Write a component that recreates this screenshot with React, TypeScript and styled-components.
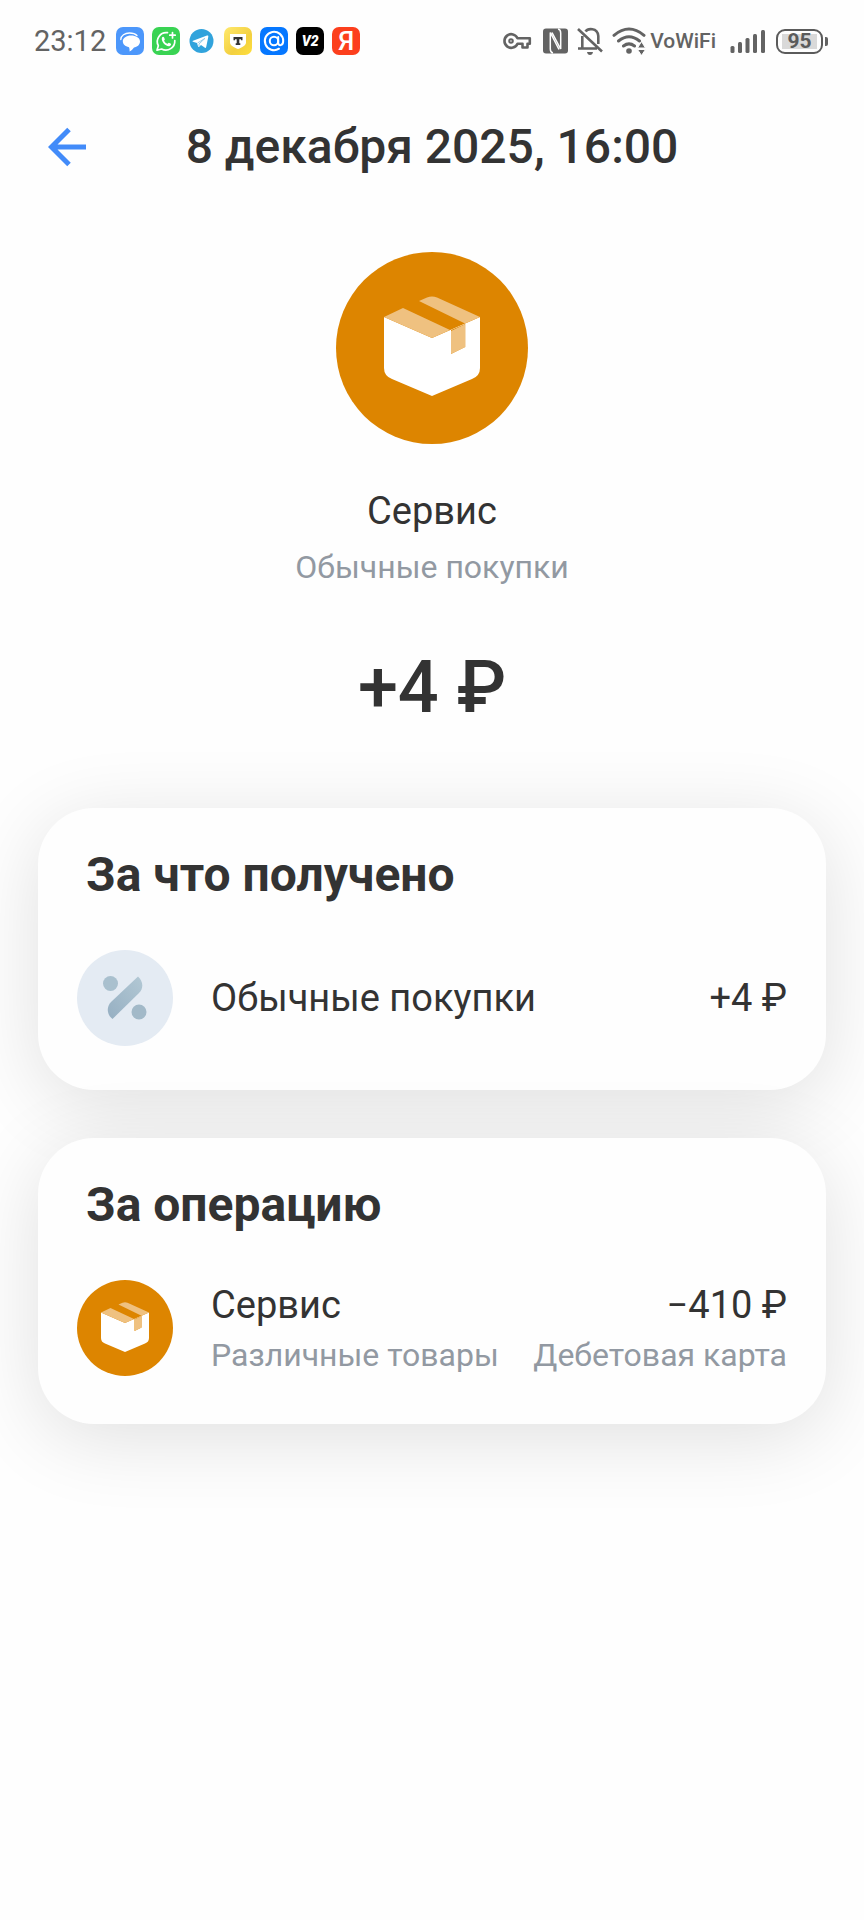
import React from 'react';
import styled, { createGlobalStyle } from 'styled-components';

const GlobalStyle = createGlobalStyle`
  * { box-sizing: border-box; }
  body {
    margin: 0;
    background: #fefefe;
    color: #333333;
    font-family: Roboto, "Noto Sans", sans-serif;
  }
  h1, h2, p { margin: 0; }
  svg { display: block; flex: none; }
`;

const Screen = styled.div`
  min-height: 100vh;
  display: flex;
  flex-direction: column;
  overflow: hidden;
`;

const StatusBar = styled.div`
  display: flex;
  align-items: center;
  justify-content: space-between;
  height: 82px;
  padding: 0 36px 0 34px;
  color: #636363;
`;

const StatusGroup = styled.div<{ $gap: number }>`
  display: flex;
  align-items: center;
  gap: ${(p) => p.$gap}px;
`;

const Clock = styled.time`
  margin-right: 2px;
  font-size: 29px;
  line-height: 36px;
`;

const Network = styled.span`
  margin: 0 4px 0 -6px;
  font-size: 21px;
  font-weight: 500;
  line-height: 28px;
`;

const AppBar = styled.header`
  display: grid;
  grid-template-columns: 56px 1fr 56px;
  align-items: center;
  padding: 37px 40px 0;
`;

const BackButton = styled.button`
  display: flex;
  align-items: center;
  justify-content: center;
  height: 56px;
  padding: 0;
  border: 0;
  background: none;
  color: #428bf9;
`;

const PageTitle = styled.h1`
  font-size: 48px;
  font-weight: 500;
  line-height: 56px;
  text-align: center;
`;

const Hero = styled.section`
  display: flex;
  flex-direction: column;
  align-items: center;
  padding: 77px 38px 78px;
`;

const Avatar = styled.div<{ $size: number; $color: string }>`
  display: flex;
  flex: none;
  align-items: center;
  justify-content: center;
  width: ${(p) => p.$size}px;
  height: ${(p) => p.$size}px;
  border-radius: 50%;
  background: ${(p) => p.$color};
`;

const Name = styled.p`
  font-size: 38px;
  line-height: 48px;
`;

const Caption = styled.p`
  color: #9299a2;
  font-size: 32px;
  line-height: 40px;
`;

const HeroText = styled.div`
  display: flex;
  flex-direction: column;
  align-items: center;
  gap: 12px;
  margin: 43px 0 59px;
`;

const Amount = styled.p`
  font-size: 72px;
  font-weight: 500;
  line-height: 84px;
`;

const Cards = styled.main`
  display: flex;
  flex-direction: column;
  gap: 48px;
  padding: 0 38px 48px;
`;

const Card = styled.section`
  padding: 39px 39px 44px;
  border-radius: 56px;
  background: #fefefe;
  box-shadow: 0 14px 80px rgba(0, 0, 0, 0.12);
`;

const CardTitle = styled.h2`
  margin: 0 9px 47px;
  font-size: 48px;
  font-weight: 700;
  line-height: 56px;
`;

const Row = styled.div<{ $twoLine?: boolean }>`
  display: flex;
  align-items: center;
  gap: 24px;
  padding-bottom: ${(p) => (p.$twoLine ? 4 : 0)}px;
`;

const RowText = styled.div<{ $end?: boolean }>`
  display: flex;
  flex: ${(p) => (p.$end ? 'none' : '1')};
  flex-direction: column;
  align-items: ${(p) => (p.$end ? 'flex-end' : 'flex-start')};
  gap: 6px;
  padding-left: ${(p) => (p.$end ? 0 : 14)}px;
  white-space: nowrap;
`;

const BoxIcon = ({ size }: { size: number }) => (
  <svg width={size} height={size} viewBox="0 0 192 192" aria-hidden="true">
    <path
      fill="#fff"
      d="M48 65 96 86 144 65V116Q144 124 136 127L96 144 56 127Q48 124 48 116Z"
    />
    <path fill="#dd8500" d="M115 78 129 72V95L115 102Z" />
    <path
      fill="#efc180"
      d="M48 65 67 56 114 78 96 86ZM83 49 91 45.500Q96 43.500 101 45.500L144 65 129 71.500ZM115 79 129.500 72V95L115 102Z"
    />
  </svg>
);

const PercentIcon = () => (
  <svg width="96" height="96" viewBox="0 0 96 96" aria-hidden="true">
    <defs>
      <linearGradient id="percent" x1="0" y1="1" x2="1" y2="0">
        <stop offset="0" stopColor="#96afc2" />
        <stop offset="1" stopColor="#b2c8d4" />
      </linearGradient>
    </defs>
    <path
      fill="url(#percent)"
      d="M61 26.500C66 31 67 38 62 43L35.500 69C30 65 29 57 34 52Z"
    />
    <circle cx="33.500" cy="33.500" r="7.500" fill="#a9c0ce" />
    <circle cx="62" cy="62" r="7.500" fill="#a2b9c8" />
  </svg>
);

const MessagesIcon = () => (
  <svg width="28" height="28" viewBox="0 0 28 28" aria-hidden="true">
    <rect width="28" height="28" rx="7" fill="#4c97fb" />
    <path
      fill="#fff"
      d="M15 8.500C20 8.500 24 11 24 14.500S21 20 18 20.500C17 22 15.500 23.500 13.500 24.500 13.800 23 13.500 21.500 13 20.300 9 19.500 6.800 17 6.800 14.300 6.800 11 10.500 8.500 15 8.500Z"
    />
    <path
      fill="none"
      stroke="#fff"
      strokeWidth="1.300"
      strokeLinecap="round"
      d="M4.800 12.500C4.800 8.500 9 6 13.500 6 17 6 19.500 7 21 8.500"
    />
  </svg>
);

const WhatsappIcon = () => (
  <svg width="28" height="28" viewBox="0 0 28 28" aria-hidden="true">
    <rect width="28" height="28" rx="7" fill="#39d353" />
    <g fill="none" stroke="#fff" strokeWidth="1.700" strokeLinecap="round" strokeLinejoin="round">
      <path d="M15.500 5.700A9 9 0 0 0 6.300 18.700L5 23.200 9.600 22A9 9 0 0 0 22.800 13.500" />
      <path d="M20.500 5.500V11M17.800 8.200H23.200" />
    </g>
    <path
      fill="#fff"
      d="M10 10.500C10.500 9.500 11.700 9.700 12 10.300L12.800 12.200C13 12.800 12 13.400 12.100 13.800 12.800 15.300 14 16.300 15.300 16.800 15.900 16.800 16.300 15.600 16.900 15.700L18.900 16.700C19.400 17.100 18.800 18.600 17.900 19 14.500 20.400 8.500 14.500 10 10.500Z"
    />
  </svg>
);

const TelegramIcon = () => (
  <svg width="28" height="28" viewBox="0 0 28 28" aria-hidden="true">
    <circle cx="13.500" cy="14" r="12" fill="#31a3dc" />
    <path
      fill="#fff"
      d="M5 13.800 19 8.600C20 8.300 20.500 8.800 20.300 9.800L18.200 20C18 21 17.300 21.100 16.600 20.600L13 18 11.200 19.800C10.600 20.300 10.200 20 10 19.300L9 16 5 14.700C4.300 14.400 4.300 14.100 5 13.800Z"
    />
    <path fill="none" stroke="#9bcde8" d="M9.500 16 17 11.300 11 17V19.500" />
  </svg>
);

const BankIcon = () => (
  <svg width="28" height="28" viewBox="0 0 28 28" aria-hidden="true">
    <defs>
      <linearGradient id="bank" x1="0" y1="0" x2="1" y2="1">
        <stop offset="0" stopColor="#ffe96e" />
        <stop offset="0.600" stopColor="#f3d040" />
        <stop offset="1" stopColor="#ffdf3a" />
      </linearGradient>
    </defs>
    <rect width="28" height="28" rx="7" fill="url(#bank)" />
    <path fill="#fff" d="M6 7H22V15.500C22 18.500 18 20.500 14 22 10 20.500 6 18.500 6 15.500Z" />
    <path
      fill="#333"
      d="M9.500 10H18.500V13.300H17V12.200H15.300V16.300H16.300V18H11.700V16.300H12.700V12.200H11V13.300H9.500Z"
    />
  </svg>
);

const MailIcon = () => (
  <svg width="28" height="28" viewBox="0 0 28 28" aria-hidden="true">
    <rect width="28" height="28" rx="7" fill="#0577ff" />
    <g fill="none" stroke="#fff" strokeWidth="2" strokeLinecap="round">
      <circle cx="14" cy="14" r="4.200" />
      <path d="M18.200 10V15.500C18.200 19.500 23.200 19 23.200 14A9.200 9.200 0 1 0 19 21.700" />
    </g>
  </svg>
);

const Tile = styled.span<{ $color: string; $size: number; $italic?: boolean }>`
  display: flex;
  align-items: center;
  justify-content: center;
  width: 28px;
  height: 28px;
  border-radius: 7px;
  background: ${(p) => p.$color};
  color: #ffffff;
  font-size: ${(p) => p.$size}px;
  font-weight: ${(p) => (p.$italic ? 900 : 500)};
  font-style: ${(p) => (p.$italic ? 'italic' : 'normal')};
  line-height: 28px;
`;

const KeyIcon = () => (
  <svg width="30" height="28" viewBox="0 0 30 28" aria-hidden="true">
    <g fill="none" stroke="currentColor" strokeWidth="2.600" strokeLinejoin="round">
      <path d="M14.500 11.300A6.800 6.800 0 1 0 14.500 16.700H19.500V20.500H24.500V16.700H26.800V11.300Z" />
      <circle cx="8" cy="14" r="1.800" strokeWidth="2" />
    </g>
  </svg>
);

const NfcIcon = () => (
  <svg width="25" height="26" viewBox="0 0 25 26" aria-hidden="true">
    <rect y="0.500" width="25" height="25" rx="3" fill="currentColor" />
    <path
      fill="none"
      stroke="#fefefe"
      strokeWidth="1.500"
      d="M10 25Q7.300 24.500 7.300 21V4.500L16 21.500M9 4.500 17.700 21V5Q17.700 1.500 15 1"
    />
  </svg>
);

const BellOffIcon = () => (
  <svg width="24" height="28" viewBox="1 0 24 28" overflow="visible" aria-hidden="true">
    <g fill="none" stroke="currentColor" strokeWidth="2.600">
      <path d="M1 2 25 24.500M5.300 9V21.500H20M1 21.500H6M8.500 4.500C10.500 1.500 20.500 0 21.300 9V17" />
    </g>
    <path fill="currentColor" d="M10 25H16Q15.500 28 13 28T10 25Z" />
  </svg>
);

const WifiIcon = () => (
  <svg width="34" height="28" viewBox="0 0 34 28" aria-hidden="true">
    <g fill="none" stroke="currentColor" strokeWidth="3" strokeLinecap="round">
      <path d="M2 8.300Q17 -4.300 32 8.300M6.500 14Q17 5.500 27.500 14M11.500 19Q17 14.800 22.500 19" />
    </g>
    <circle cx="17" cy="24" r="2.800" fill="currentColor" />
    <path
      fill="currentColor"
      stroke="#fefefe"
      d="M29.500 14.500 33.500 21H25.500ZM29.500 28.500 33.500 22.500H25.500Z"
    />
  </svg>
);

const SignalIcon = () => (
  <svg width="36" height="24" viewBox="0 0 36 24" aria-hidden="true">
    <g fill="currentColor">
      <rect x="0.500" y="17" width="4" height="7" rx="1.500" />
      <rect x="8" y="13" width="4" height="11" rx="1.500" />
      <rect x="15.500" y="9" width="4" height="15" rx="1.500" />
      <rect x="23" y="5" width="4" height="19" rx="1.500" />
      <rect x="31" y="1" width="4" height="23" rx="1.500" />
    </g>
  </svg>
);

const Battery = styled.span`
  display: flex;
  align-items: center;
  gap: 2px;

  &::after {
    content: '';
    width: 3px;
    height: 9px;
    border-radius: 0 2px 2px 0;
    background: currentColor;
  }
`;

const BatteryLevel = styled.span`
  display: flex;
  align-items: center;
  justify-content: center;
  width: 47px;
  height: 25px;
  border: 2px solid currentColor;
  border-radius: 9px;
  background: linear-gradient(#d9d9d9, #d9d9d9) center / 35px 15px no-repeat;
  color: #5b5b5b;
  font-size: 21px;
  font-weight: 700;
  line-height: 24px;
`;

export default function App() {
  return (
    <Screen>
      <GlobalStyle />
      <StatusBar>
        <StatusGroup $gap={8}>
          <Clock>23:12</Clock>
          <MessagesIcon />
          <WhatsappIcon />
          <TelegramIcon />
          <BankIcon />
          <MailIcon />
          <Tile $color="#000000" $size={14} $italic>V2</Tile>
          <Tile $color="#fc3f1d" $size={26}>Я</Tile>
        </StatusGroup>
        <StatusGroup $gap={10}>
          <KeyIcon />
          <NfcIcon />
          <BellOffIcon />
          <WifiIcon />
          <Network>VoWiFi</Network>
          <SignalIcon />
          <Battery>
            <BatteryLevel>95</BatteryLevel>
          </Battery>
        </StatusGroup>
      </StatusBar>

      <AppBar>
        <BackButton type="button" aria-label="Назад">
          <svg width="40" height="40" viewBox="0 0 40 40" aria-hidden="true">
            <path
              fill="none"
              stroke="currentColor"
              strokeWidth="5"
              d="M38 20H4M21 2.500 3.500 20 21 37.500"
            />
          </svg>
        </BackButton>
        <PageTitle>8 декабря 2025, 16:00</PageTitle>
      </AppBar>

      <Hero>
        <Avatar $size={192} $color="#dd8500">
          <BoxIcon size={192} />
        </Avatar>
        <HeroText>
          <Name>Сервис</Name>
          <Caption>Обычные покупки</Caption>
        </HeroText>
        <Amount>+4 ₽</Amount>
      </Hero>

      <Cards>
        <Card>
          <CardTitle>За что получено</CardTitle>
          <Row>
            <Avatar $size={96} $color="#e4ebf3">
              <PercentIcon />
            </Avatar>
            <RowText>
              <Name>Обычные покупки</Name>
            </RowText>
            <RowText $end>
              <Name>+4 ₽</Name>
            </RowText>
          </Row>
        </Card>
        <Card>
          <CardTitle>За операцию</CardTitle>
          <Row $twoLine>
            <Avatar $size={96} $color="#dd8500">
              <BoxIcon size={96} />
            </Avatar>
            <RowText>
              <Name>Сервис</Name>
              <Caption>Различные товары</Caption>
            </RowText>
            <RowText $end>
              <Name>−410 ₽</Name>
              <Caption>Дебетовая карта</Caption>
            </RowText>
          </Row>
        </Card>
      </Cards>
    </Screen>
  );
}
